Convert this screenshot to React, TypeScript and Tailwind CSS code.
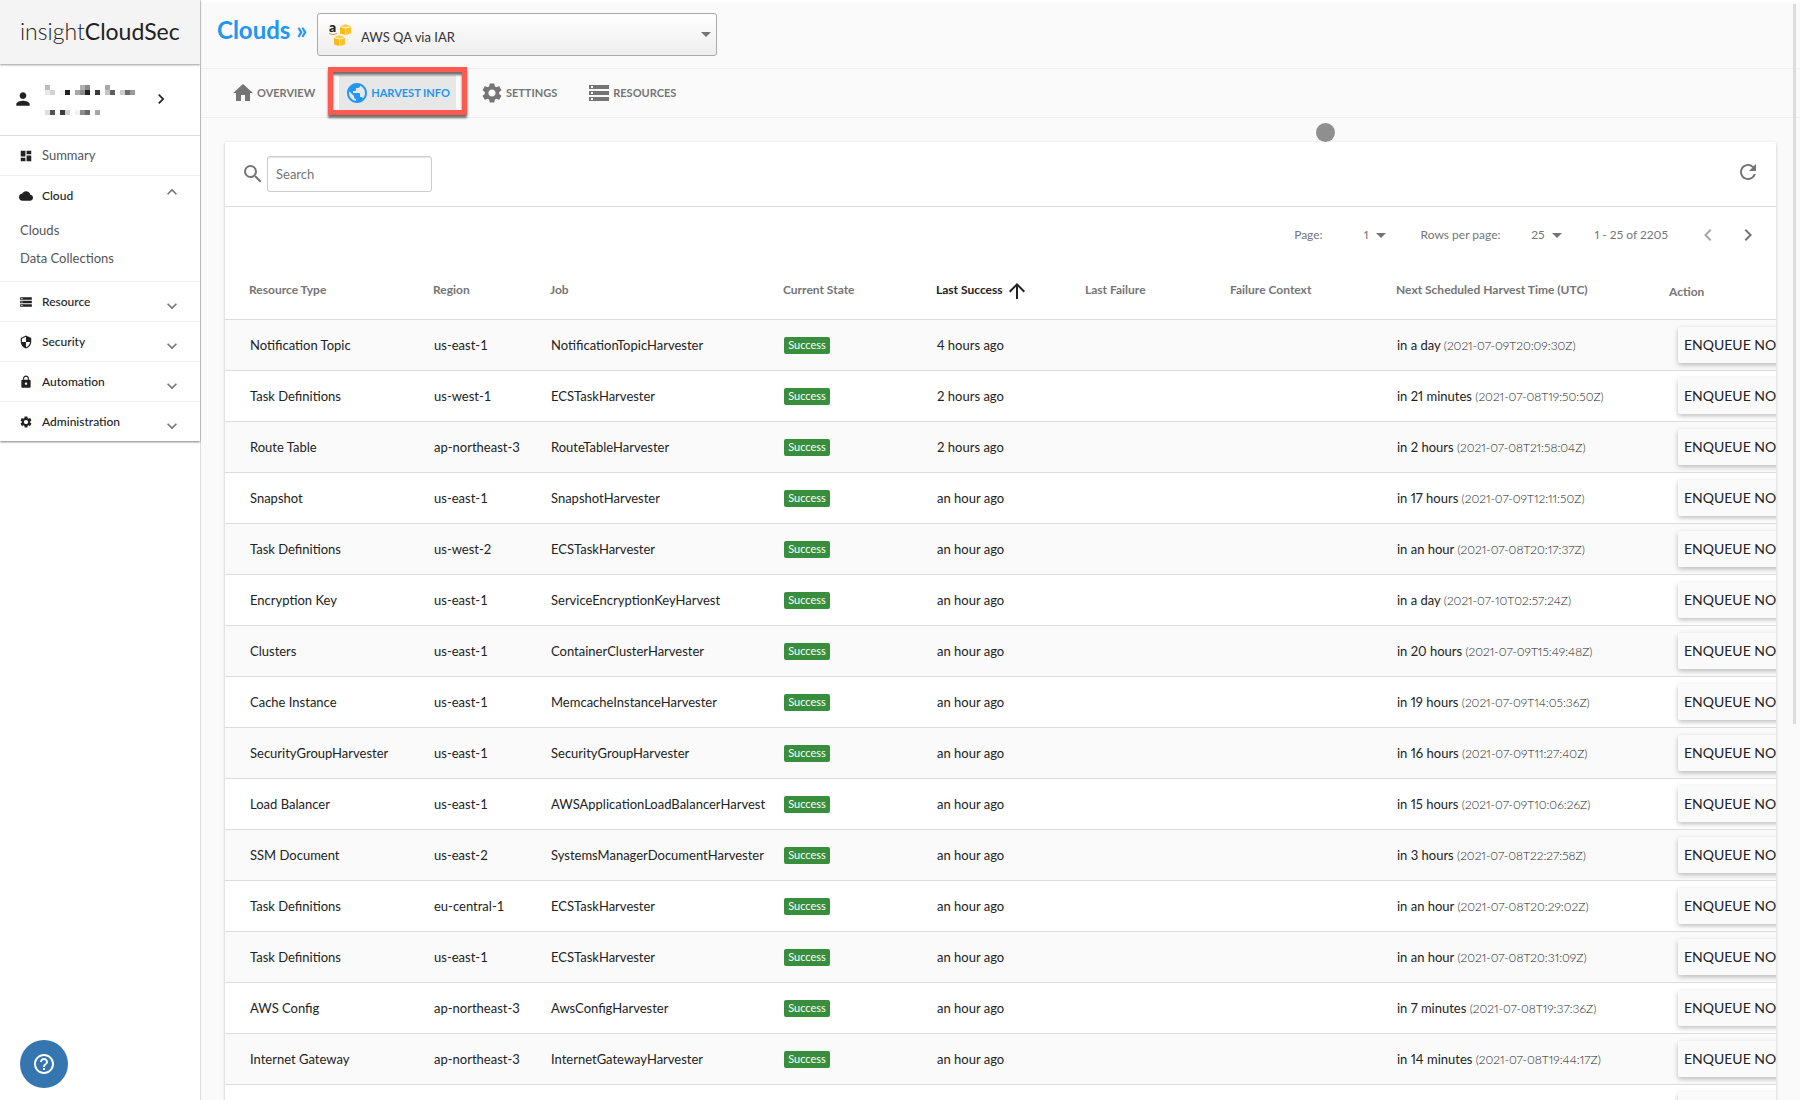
import { useState } from "react";
import type { IconType } from "react-icons";
import {
  MdArrowDropDown,
  MdArrowUpward,
  MdChevronLeft,
  MdChevronRight,
  MdCloud,
  MdDashboard,
  MdExpandLess,
  MdExpandMore,
  MdHelpOutline,
  MdHome,
  MdLock,
  MdPerson,
  MdPublic,
  MdRefresh,
  MdSearch,
  MdSecurity,
  MdSettings,
  MdStorage,
} from "react-icons/md";
import classNames from "clsx";

type Harvest = {
  type: string;
  region: string;
  job: string;
  success: string;
  next: string;
  time: string;
};

const row = (
  type: string,
  region: string,
  job: string,
  success: string,
  next: string,
  time: string
): Harvest => ({ type, region, job, success, next, time });

const harvests: Harvest[] = [
  row("Notification Topic", "us-east-1", "NotificationTopicHarvester", "4 hours ago", "in a day", "2021-07-09T20:09:30Z"),
  row("Task Definitions", "us-west-1", "ECSTaskHarvester", "2 hours ago", "in 21 minutes", "2021-07-08T19:50:50Z"),
  row("Route Table", "ap-northeast-3", "RouteTableHarvester", "2 hours ago", "in 2 hours", "2021-07-08T21:58:04Z"),
  row("Snapshot", "us-east-1", "SnapshotHarvester", "an hour ago", "in 17 hours", "2021-07-09T12:11:50Z"),
  row("Task Definitions", "us-west-2", "ECSTaskHarvester", "an hour ago", "in an hour", "2021-07-08T20:17:37Z"),
  row("Encryption Key", "us-east-1", "ServiceEncryptionKeyHarvest", "an hour ago", "in a day", "2021-07-10T02:57:24Z"),
  row("Clusters", "us-east-1", "ContainerClusterHarvester", "an hour ago", "in 20 hours", "2021-07-09T15:49:48Z"),
  row("Cache Instance", "us-east-1", "MemcacheInstanceHarvester", "an hour ago", "in 19 hours", "2021-07-09T14:05:36Z"),
  row("SecurityGroupHarvester", "us-east-1", "SecurityGroupHarvester", "an hour ago", "in 16 hours", "2021-07-09T11:27:40Z"),
  row("Load Balancer", "us-east-1", "AWSApplicationLoadBalancerHarvest", "an hour ago", "in 15 hours", "2021-07-09T10:06:26Z"),
  row("SSM Document", "us-east-2", "SystemsManagerDocumentHarvester", "an hour ago", "in 3 hours", "2021-07-08T22:27:58Z"),
  row("Task Definitions", "eu-central-1", "ECSTaskHarvester", "an hour ago", "in an hour", "2021-07-08T20:29:02Z"),
  row("Task Definitions", "us-east-1", "ECSTaskHarvester", "an hour ago", "in an hour", "2021-07-08T20:31:09Z"),
  row("AWS Config", "ap-northeast-3", "AwsConfigHarvester", "an hour ago", "in 7 minutes", "2021-07-08T19:37:36Z"),
  row("Internet Gateway", "ap-northeast-3", "InternetGatewayHarvester", "an hour ago", "in 14 minutes", "2021-07-08T19:44:17Z"),
];

const sections: { label: string; icon: IconType; links?: string[] }[] = [
  { label: "Cloud", icon: MdCloud, links: ["Clouds", "Data Collections"] },
  { label: "Resource", icon: MdStorage },
  { label: "Security", icon: MdSecurity },
  { label: "Automation", icon: MdLock },
  { label: "Administration", icon: MdSettings },
];

const tabs: { label: string; icon: IconType }[] = [
  { label: "OVERVIEW", icon: MdHome },
  { label: "HARVEST INFO", icon: MdPublic },
  { label: "SETTINGS", icon: MdSettings },
  { label: "RESOURCES", icon: MdStorage },
];

// [column, row, shade] on a 5px grid
const maskedName: [number, number, string][] = [
  [0, 0, "#bdbdbd"], [7, 0, "#b0b0b0"], [8, 0, "#8a8a8a"], [12, 0, "#aaaaaa"],
  [0, 1, "#e8e8e8"], [1, 1, "#d2d2d2"], [3, 1, "#f6f6f6"], [4, 1, "#222222"],
  [6, 1, "#a8a8a8"], [7, 1, "#8c8c8c"], [8, 1, "#222222"], [10, 1, "#3c3c3c"],
  [12, 1, "#c4c4c4"], [13, 1, "#5e5e5e"], [15, 1, "#cccccc"], [16, 1, "#6e6e6e"], [17, 1, "#9a9a9a"],
  [0, 5, "#dedede"], [1, 5, "#555555"], [3, 5, "#3c3c3c"], [4, 5, "#d4d4d4"],
  [6, 5, "#f2f2f2"], [7, 5, "#8c8c8c"], [8, 5, "#6a6a6a"], [10, 5, "#a6a6a6"],
];

function MaskedName() {
  return (
    <svg width="90" height="30" viewBox="0 0 18 6" shapeRendering="crispEdges" aria-hidden="true">
      {maskedName.map(([x, y, fill]) => (
        <rect key={`${x}-${y}`} x={x} y={y} width="1" height="1" fill={fill} />
      ))}
    </svg>
  );
}

function Cube({ x, y }: { x: number; y: number }) {
  return (
    <g transform={`translate(${x} ${y})`}>
      <path d="M0 2.2 5.5 0 11 2.2 5.5 3.8z" fill="#ffd054" />
      <path d="M0 3 5.2 4.6V11L0 9.4z" fill="#ffb915" />
      <path d="M11 3 5.8 4.6V11L11 9.4z" fill="#ffc32a" />
    </g>
  );
}

function AwsIcon() {
  return (
    <svg width="24" height="24" viewBox="0 0 24 24" aria-hidden="true">
      <text x="0" y="9" fontSize="14" fontWeight="900" fontFamily="Lato, sans-serif" fill="#222">
        a
      </text>
      <path d="M0 10.5q4 2.5 8 0" stroke="#f0923a" strokeWidth="1" fill="none" />
      <Cube x={11} y={1} />
      <Cube x={5} y={12} />
    </svg>
  );
}

function Sidebar() {
  const [open, setOpen] = useState("Cloud");

  return (
    <aside className="flex w-[201px] shrink-0 flex-col border-r border-[#dcdcdc] bg-white">
      <div className="z-10 flex h-16 shrink-0 items-center bg-[#f4f4f4] px-5 pb-0.5 text-[23px] text-[#222] shadow-[0_1px_2px_rgba(0,0,0,0.4)]">
        <span className="font-light">insight</span>
        <span>CloudSec</span>
      </div>
      <div className="shadow-[0_1px_2px_rgba(0,0,0,0.5)]">
        <button
          type="button"
          aria-label="Account"
          className="flex h-[72px] w-full items-center border-b border-[#dcdcdc] pl-[13px] text-[#222]"
        >
          <MdPerson className="mb-0.5 size-5" />
          <span className="ml-3">
            <MaskedName />
          </span>
          <MdChevronRight className="mb-0.5 ml-4 size-5" />
        </button>
        <nav className="text-[13px]">
          <a href="#summary" className="flex h-[39px] items-center pl-[19px] text-[#555]">
            <MdDashboard className="size-[14px] text-[#222]" />
            <span className="ml-[9px]">Summary</span>
          </a>
          {sections.map(({ label, icon: Icon, links }) => (
            <div key={label} className="border-t border-[#f0f0f0]">
              <button
                type="button"
                className="flex h-[39px] w-full items-center pr-[18px] pl-[19px] text-xs font-medium text-[#222]"
                onClick={() => setOpen(open === label ? "" : label)}
              >
                <Icon className="size-[14px]" />
                <span className="ml-[9px]">{label}</span>
                {open === label ? (
                  <MdExpandLess className="mb-2 ml-auto size-5 text-[#757575]" />
                ) : (
                  <MdExpandMore className="mt-2 ml-auto size-5 text-[#757575]" />
                )}
              </button>
              {open === label && links && (
                <ul className="pt-0.5 pb-2 pl-5 text-[#555]">
                  {links.map((link) => (
                    <li key={link} className="flex h-7 items-center">
                      <a href="#clouds">{link}</a>
                    </li>
                  ))}
                </ul>
              )}
            </div>
          ))}
        </nav>
      </div>
      <button
        type="button"
        aria-label="Help"
        className="fixed bottom-3 left-5 z-20 flex size-12 items-center justify-center rounded-full bg-[#3575b0] text-white"
      >
        <MdHelpOutline className="size-6" />
      </button>
    </aside>
  );
}

function CloudSelect() {
  return (
    <label className="grid h-[43px] w-[400px] grid-cols-[44px_1fr_20px] items-center rounded-[3px] border border-[#aaa] bg-linear-to-b from-white to-[#eee] text-[13px] text-[#333]">
      <span className="col-start-1 row-start-1 pl-[11px]">
        <AwsIcon />
      </span>
      <select
        aria-label="Cloud"
        className="col-span-3 col-start-1 row-start-1 h-full w-full appearance-none bg-transparent pt-1.5 pl-[43px]"
      >
        <option>AWS QA via IAR</option>
      </select>
      <MdArrowDropDown className="pointer-events-none col-start-3 row-start-1 mb-0.5 size-6 justify-self-center text-[#757575]" />
    </label>
  );
}

function Tabs() {
  return (
    <nav className="flex h-[50px] shrink-0 items-center gap-[18px] border-y border-[#eee] px-6 text-[11px] font-bold text-[#757575]">
      {tabs.map(({ label, icon: Icon }) => {
        const active = label === "HARVEST INFO";
        return (
          <a
            key={label}
            href="#tab"
            className={classNames("relative flex h-9 items-center gap-0.5 px-1.5", {
              "bg-[#e7e7e7] text-[#2196f3]": active,
            })}
          >
            <Icon className="size-6" />
            {label}
            {active && (
              <span className="absolute -inset-x-[11px] -top-2 -bottom-1 border-5 border-[#ff5a4f] drop-shadow-[0_3px_1px_rgba(0,0,0,0.55)]" />
            )}
          </a>
        );
      })}
    </nav>
  );
}

function Pagination() {
  return (
    <div className="flex h-14 items-center justify-end pr-4 text-xs text-[#757575] proportional-nums">
      <label className="flex items-center">
        Page:
        <span className="ml-[22px] grid w-12 items-center">
          <select className="col-start-1 row-start-1 appearance-none pr-6 text-right">
            <option>1</option>
          </select>
          <MdArrowDropDown className="pointer-events-none col-start-1 row-start-1 size-6 justify-self-end" />
        </span>
      </label>
      <label className="ml-7 flex items-center">
        Rows per page:
        <span className="ml-5 grid w-12 items-center">
          <select className="col-start-1 row-start-1 appearance-none pr-6 text-right">
            <option>25</option>
          </select>
          <MdArrowDropDown className="pointer-events-none col-start-1 row-start-1 size-6 justify-self-end" />
        </span>
      </label>
      <span className="mr-7 ml-[26px]">1 - 25 of 2205</span>
      <button type="button" aria-label="Previous page" className="text-[#a6a6a6]">
        <MdChevronLeft className="size-6" />
      </button>
      <button type="button" aria-label="Next page" className="ml-4">
        <MdChevronRight className="size-6" />
      </button>
    </div>
  );
}

function EnqueueButton() {
  return (
    <button
      type="button"
      className="flex h-9 items-center rounded-xs bg-[#fafafa] px-1.5 text-sm whitespace-nowrap shadow-[0_2px_5px_rgba(0,0,0,0.26)] [font-kerning:none]"
    >
      ENQUEUE NOW
    </button>
  );
}

function HarvestTable() {
  return (
    <div className="overflow-hidden">
      <table className="w-full min-w-[1600px] table-fixed text-left text-[#222]">
        <colgroup>
          <col className="w-[208px]" />
          <col className="w-[117px]" />
          <col className="w-[233px]" />
          <col className="w-[153px]" />
          <col className="w-[149px]" />
          <col className="w-[145px]" />
          <col className="w-[166px]" />
          <col className="w-[273px]" />
          <col />
        </colgroup>
        <thead>
          <tr className="h-14 border-b border-[#dcdcdc] text-xs text-[#757575]">
            <th className="pb-0.5 pl-6">Resource Type</th>
            <th className="pb-0.5">Region</th>
            <th className="pb-0.5">Job</th>
            <th className="pb-0.5">Current State</th>
            <th className="text-[#222]">
              <span className="flex items-center gap-[2px]">
                <span className="pb-0.5">Last Success</span>
                <MdArrowUpward className="size-6" />
              </span>
            </th>
            <th className="pb-0.5">Last Failure</th>
            <th className="pb-0.5">Failure Context</th>
            <th className="pb-0.5">Next Scheduled Harvest Time (UTC)</th>
            <th className="pt-0.5">Action</th>
          </tr>
        </thead>
        <tbody className="text-[13px]">
          {harvests.map((item, i) => (
            <tr key={i} className="h-[51px] border-b border-[#dcdcdc] odd:bg-[#fafafa]">
              <td className="pt-0.5 pl-[25px]">{item.type}</td>
              <td className="pt-0.5 pl-px">{item.region}</td>
              <td className="pt-0.5 pl-px">{item.job}</td>
              <td className="pt-0.5 pl-px">
                <span className="flex h-[17px] w-[46px] items-center justify-center rounded-xs bg-[#388e3c] text-[11px] text-white">
                  Success
                </span>
              </td>
              <td className="pt-0.5 pl-px">{item.success}</td>
              <td />
              <td />
              <td className="pt-0.5 pl-px proportional-nums">
                {item.next} <span className="text-xs font-light">({item.time})</span>
              </td>
              <td className="pl-[9px]">
                <EnqueueButton />
              </td>
            </tr>
          ))}
          <tr className="h-[51px]">
            <td colSpan={8} />
            <td className="pl-[9px]">
              <EnqueueButton />
            </td>
          </tr>
        </tbody>
      </table>
    </div>
  );
}

function App() {
  return (
    <div className="flex h-screen overflow-hidden font-[Lato,sans-serif]">
      <Sidebar />
      <main className="relative flex min-w-0 flex-1 flex-col overflow-hidden border-t-3 border-white bg-[#fafafa]">
        <header className="flex h-[65px] shrink-0 items-start gap-[10px] pt-[10px] pl-4">
          <h1 className="text-2xl leading-[34px] font-bold whitespace-nowrap text-[#2196f3]">Clouds »</h1>
          <CloudSelect />
        </header>
        <Tabs />
        <section className="mx-6 mt-6 shrink-0 rounded-xs bg-white shadow-[0_1px_3px_rgba(0,0,0,0.25)]">
          <div className="flex h-[65px] items-center border-b border-[#dcdcdc] px-4 text-[#757575]">
            <MdSearch className="size-6" />
            <input
              type="text"
              aria-label="Search"
              placeholder="Search"
              className="ml-0.5 h-9 w-[165px] rounded-[3px] border border-[#ccc] px-2 text-[13px] shadow-[inset_0_1px_1px_rgba(0,0,0,0.1)] placeholder:text-[#757575]"
            />
            <button type="button" aria-label="Refresh" className="mb-1 ml-auto">
              <MdRefresh className="size-6" />
            </button>
          </div>
          <Pagination />
          <HarvestTable />
        </section>
        <span className="absolute top-[120px] left-[1115px] size-[19px] rounded-full bg-[#8f8f8f]" />
        <span className="absolute top-px right-1 h-[720px] w-[3px] bg-[#dcdcdc]" />
      </main>
    </div>
  );
}

export default App;
